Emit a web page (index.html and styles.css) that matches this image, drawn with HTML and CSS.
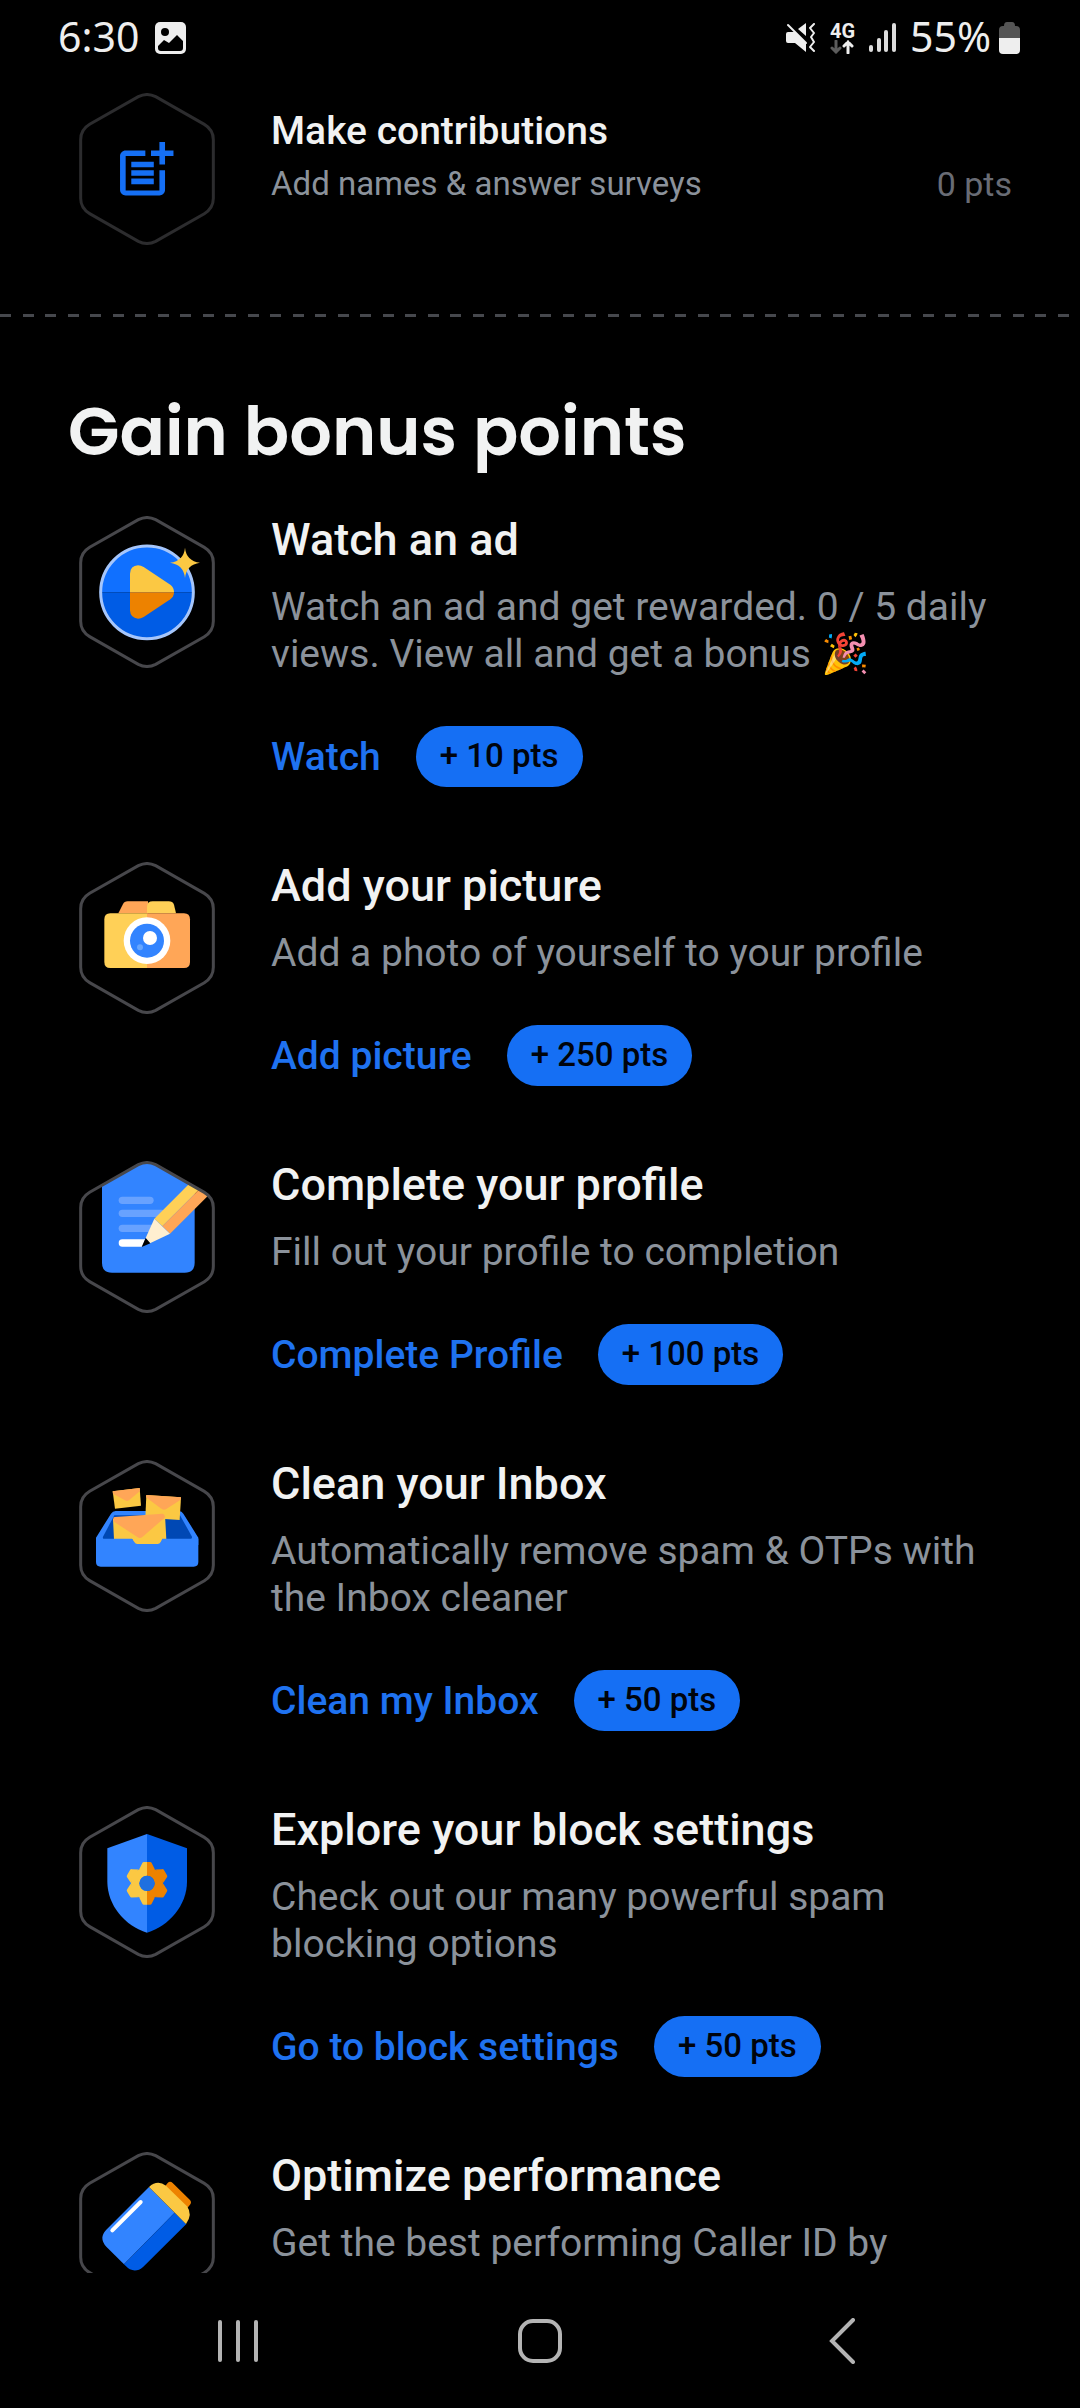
FILE: index.html
```html
<!DOCTYPE html>
<html lang="en">
<head>
<meta charset="utf-8">
<meta name="viewport" content="width=device-width, initial-scale=1">
<title>Gain bonus points</title>
<link rel="stylesheet" href="styles.css">
</head>
<body>
<svg class="defs" aria-hidden="true">
  <defs>
    <symbol id="hex" viewBox="0 0 408 456">
      <path d="M178 11Q204 -2 230 11L376 94Q403 110 403 140V316Q403 346 376 362L230 445Q204 458 178 445L32 362Q5 346 5 316V140Q5 110 32 94Z" fill="none" stroke="currentColor" stroke-width="9"/>
    </symbol>
    <clipPath id="page-clip">
      <path transform="translate(57 33)" d="M178 11Q204 -2 230 11L376 94Q403 110 403 140V316Q403 346 376 362L230 445Q204 458 178 445L32 362Q5 346 5 316V140Q5 110 32 94Z"/>
    </clipPath>
    <clipPath id="left-half"><rect x="57" y="33" width="204" height="456"/></clipPath>
    <clipPath id="right-half"><rect x="261" y="33" width="204" height="456"/></clipPath>
    <g id="gear">
      <path id="tooth" d="M238 222L247 204Q248 201 252 201H270Q274 201 275 204L284 222Z"/>
      <use href="#tooth" transform="rotate(60 261 265)"/>
      <use href="#tooth" transform="rotate(120 261 265)"/>
      <use href="#tooth" transform="rotate(180 261 265)"/>
      <use href="#tooth" transform="rotate(240 261 265)"/>
      <use href="#tooth" transform="rotate(300 261 265)"/>
      <circle cx="261" cy="265" r="35.500" fill="none" stroke="currentColor" stroke-width="25"/>
    </g>
  </defs>
</svg>

<div class="app">
  <header class="status">
    <div class="status-side">
      <span class="clock">6:30</span>
      <svg width="31" height="32" viewBox="0 0 31 32" aria-hidden="true">
        <rect width="31" height="32" rx="5" fill="#eee"/>
        <circle cx="10" cy="10" r="4" fill="#000"/>
        <path d="M3 24L9 18L14 21L22 13L28 19V26Q28 29 25 29H6Q3 29 3 26Z" fill="#000"/>
      </svg>
    </div>
    <div class="status-side status-right">
      <svg class="mute" width="30" height="30" viewBox="0 0 30 30" aria-hidden="true">
        <path d="M2 9H9L20 20V29L9 20H2Q0 20 0 18V11Q0 9 2 9ZM12 6L20 0V13Z" fill="#eee"/>
        <path d="M2 2L20 20" stroke="#eee" stroke-width="2" stroke-linecap="round"/>
        <path d="M28 1L24 5L28 10L25 14L28 19L24 24L28 28" fill="none" stroke="#eee" stroke-width="2" stroke-linecap="round" stroke-linejoin="round"/>
      </svg>
      <div class="network">
        <span>4G</span>
        <svg width="24" height="14" viewBox="0 0 24 14" fill="none" stroke-width="3" stroke-linecap="round" aria-hidden="true">
          <path d="M6 1V12M2 8L6 12L10 8" stroke="#5c5c5c"/>
          <path d="M18 13V2M14 6L18 2L22 6" stroke="#eee"/>
        </svg>
      </div>
      <svg class="signal" width="27" height="30" viewBox="0 0 27 30" fill="#ddd" aria-hidden="true">
        <rect x="0" y="22" width="4" height="7" rx="2"/>
        <rect x="8" y="15" width="4" height="14" rx="2"/>
        <rect x="15" y="7" width="4" height="22" rx="2"/>
        <rect x="23" y="0" width="4" height="29" rx="2"/>
      </svg>
      <span class="clock">55%</span>
      <svg class="battery" width="21" height="32" viewBox="0 0 21 32" aria-hidden="true">
        <path d="M0 17V8Q0 4 4 4H5Q5 0 8 0H13Q16 0 16 4H17Q21 4 21 8V17Z" fill="#555"/>
        <path d="M0 16H21V28Q21 32 17 32H4Q0 32 0 28Z" fill="#eee"/>
      </svg>
    </div>
  </header>

  <main class="content">
    <section class="row contribution">
      <svg class="badge badge-dim" viewBox="0 0 136 152" aria-hidden="true">
        <use href="#hex" width="136" height="152"/>
        <path transform="translate(32.600 43.400) scale(2.8125)" fill="#156ff4" d="M17 19.220H5V7h7V5H5c-1.100 0-2 .9-2 2v12c0 1.100.9 2 2 2h12c1.100 0 2-.9 2-2v-7h-2zM19 2h-2v3h-3v2h3v3h2V7h3V5h-3zM7 9h8v2H7zM7 12h8v2H7zM7 15h8v2H7z"/>
      </svg>
      <div class="contribution-text">
        <h2 class="contribution-title">Make contributions</h2>
        <p class="contribution-line"><span>Add names &amp; answer surveys</span><span class="points">0 pts</span></p>
      </div>
    </section>

    <hr class="divider">

    <h1 class="heading">Gain bonus points</h1>

    <div class="list">
      <section class="row">
        <svg class="badge" viewBox="57 47 408 456" aria-hidden="true">
          <use href="#hex" x="57" y="47" width="408" height="456"/>
          <path d="M121 276A140 140 0 0 1 401 276Z" fill="#1070ff"/>
          <path d="M121 276A140 140 0 0 0 401 276Z" fill="#005ce5"/>
          <circle cx="261" cy="276" r="139" fill="none" stroke="#a6c6fb" stroke-width="9"/>
          <path d="M210 276V220Q211 196 234 195Q243 195 251 200L331 253Q342 261 342 276Z" fill="#fbc843"/>
          <path d="M210 276V330Q211 353 234 355Q243 355 251 350L331 297Q342 289 342 276Z" fill="#ed8200"/>
          <path d="M375 142Q379 182 420 187Q379 193 375 233Q371 193 330 187Q371 182 375 142Z" fill="#fbc843"/>
        </svg>
        <div class="task">
          <h2 class="title">Watch an ad</h2>
          <p class="desc">Watch an ad and get rewarded. 0 / 5 daily views. View all and get a bonus 🎉</p>
          <div class="actions"><button class="link" type="button">Watch</button><span class="pill">+ 10 pts</span></div>
        </div>
      </section>

      <section class="row">
        <svg class="badge" viewBox="57 36 408 456" aria-hidden="true">
          <use href="#hex" x="57" y="36" width="408" height="456"/>
          <path d="M175 190L188 164Q193 154 203 154H264V190Z" fill="#ffa657"/>
          <path d="M261 190V170Q262 154 278 154H326Q338 154 342 164L348 190Z" fill="#ffd057"/>
          <path d="M261 190V354H151Q133 354 133 336V208Q133 190 151 190Z" fill="#ffd057"/>
          <path d="M261 190V354H372Q390 354 390 336V208Q390 190 372 190Z" fill="#ffa657"/>
          <circle cx="261" cy="272" r="70" fill="#fff"/>
          <circle cx="261" cy="272" r="51" fill="#3284ff"/>
          <circle cx="270" cy="264" r="21" fill="#fff"/>
          <circle cx="240" cy="292" r="9" fill="#66a6ff"/>
        </svg>
        <div class="task">
          <h2 class="title">Add your picture</h2>
          <p class="desc">Add a photo of yourself to your profile</p>
          <div class="actions"><button class="link" type="button">Add picture</button><span class="pill">+ 250 pts</span></div>
        </div>
      </section>

      <section class="row">
        <svg class="badge" viewBox="57 33 408 456" aria-hidden="true">
          <g clip-path="url(#page-clip)">
            <path d="M126 33H404V338Q404 368 374 368H156Q126 368 126 338Z" fill="#3284ff"/>
            <g fill="#68a2ff">
              <rect x="176" y="140" width="105" height="22" rx="11"/>
              <rect x="176" y="179" width="140" height="22" rx="11"/>
              <rect x="176" y="224" width="110" height="22" rx="11"/>
            </g>
            <path d="M187 268H256L246 290H187Q176 290 176 279Q176 268 187 268Z" fill="#fff"/>
            <path d="M283 206L423 66L446 90L307 229Z" fill="#ffd057"/>
            <path d="M307 229L446 90L469 112L330 251Z" fill="#ffa657"/>
            <path d="M283 206L330 251L270 280L257 264Z" fill="#ffefd0"/>
            <path d="M257 264L271 280L245 291Z" fill="#000"/>
          </g>
          <use href="#hex" x="57" y="33" width="408" height="456"/>
        </svg>
        <div class="task">
          <h2 class="title">Complete your profile</h2>
          <p class="desc">Fill out your profile to completion</p>
          <div class="actions"><button class="link" type="button">Complete Profile</button><span class="pill">+ 100 pts</span></div>
        </div>
      </section>

      <section class="row">
        <svg class="badge" viewBox="57 45 408 456" aria-hidden="true">
          <use href="#hex" x="57" y="45" width="408" height="456"/>
          <path d="M153 206Q158 198 167 198H356Q366 198 370 206L415 278V300H108V278Z" fill="#3284ff"/>
          <path d="M163 211H360L396 275Q397 283 390 283H134Q127 283 129 275Z" fill="#0048b4"/>
          <path d="M158 139L239 129L243 182L165 191Z" fill="#fbc843"/>
          <path d="M158 139L239 129L240 138L207 166Q201 170 195 166L159 146Z" fill="#ffa657"/>
          <path d="M259 150L363 157L359 225L256 218Z" fill="#fbc843"/>
          <path d="M259 150L363 157L362 164L319 192Q310 197 302 190L258 157Z" fill="#ffa657"/>
          <path d="M159 222L315 210L319 283H307V300H218V283H162Z" fill="#fbc843"/>
          <path d="M160 219Q160 216 165 216L308 206Q316 208 314 218L248 275Q240 282 232 276L160 229Z" fill="#ffa657"/>
          <path d="M108 281H216L223 291Q226 297 232 297H293Q299 297 302 291L307 281H415V351Q415 365 401 365H122Q108 365 108 351Z" fill="#3284ff"/>
        </svg>
        <div class="task">
          <h2 class="title">Clean your Inbox</h2>
          <p class="desc">Automatically remove spam &amp; OTPs with the Inbox cleaner</p>
          <div class="actions"><button class="link" type="button">Clean my Inbox</button><span class="pill">+ 50 pts</span></div>
        </div>
      </section>

      <section class="row">
        <svg class="badge" viewBox="57 33 408 456" aria-hidden="true">
          <use href="#hex" x="57" y="33" width="408" height="456"/>
          <path d="M261 117L142 160V260C142 330 195 393 261 413Z" fill="#3284ff"/>
          <path d="M261 117L381 160V260C381 330 327 393 261 413Z" fill="#005ce5"/>
          <g clip-path="url(#left-half)"><use class="gear-light" href="#gear"/></g>
          <g clip-path="url(#right-half)"><use class="gear-dark" href="#gear"/></g>
          <circle cx="261" cy="265" r="23" fill="#1f70e0"/>
        </svg>
        <div class="task">
          <h2 class="title">Explore your block settings</h2>
          <p class="desc">Check out our many powerful spam blocking options</p>
          <div class="actions"><button class="link" type="button">Go to block settings</button><span class="pill">+ 50 pts</span></div>
        </div>
      </section>

      <section class="row">
        <svg class="badge" viewBox="57 36 408 456" aria-hidden="true">
          <use href="#hex" x="57" y="36" width="408" height="456"/>
          <path d="M314 140L323 129Q330 122 338 129L390 180Q396 187 390 194L380 206Z" fill="#ed8200"/>
          <path d="M267 141L344 218L192 373L139 320Q115 294 139 269Z" fill="#3284ff"/>
          <path d="M344 218L379 252L250 380Q222 405 195 376L192 373Z" fill="#005ce5"/>
          <path d="M267 141Q292 118 318 137L381 199Q399 224 378 252Z" fill="#fbc843"/>
          <path d="M157 271L242 186" stroke="#fff" stroke-width="12" stroke-linecap="round"/>
        </svg>
        <div class="task">
          <h2 class="title">Optimize performance</h2>
          <p class="desc">Get the best performing Caller ID by</p>
        </div>
      </section>
    </div>
  </main>

  <nav class="nav" aria-label="System">
    <button class="nav-button" type="button" aria-label="Recent apps">
      <svg width="40" height="42" viewBox="0 0 40 42" fill="#b4b4b4"><rect width="4" height="42" rx="2"/><rect x="18" width="4" height="42" rx="2"/><rect x="36" width="4" height="42" rx="2"/></svg>
    </button>
    <button class="nav-button" type="button" aria-label="Home">
      <svg width="44" height="44" viewBox="0 0 44 44"><rect x="2" y="2" width="40" height="40" rx="13" fill="none" stroke="#b4b4b4" stroke-width="4"/></svg>
    </button>
    <button class="nav-button" type="button" aria-label="Back">
      <svg width="26" height="46" viewBox="0 0 26 46"><path d="M24 2L3 23L24 44" fill="none" stroke="#b4b4b4" stroke-width="4" stroke-linecap="round"/></svg>
    </button>
  </nav>
</div>
</body>
</html>
```
FILE: styles.css
```css
* {
  box-sizing: border-box;
}

body {
  margin: 0;
  background: #000;
  color: #f1f2f2;
  font-family: Roboto, "Noto Sans", sans-serif;
}

h1,
h2,
p {
  margin: 0;
}

button {
  padding: 0;
  border: 0;
  background: none;
  font-family: inherit;
  cursor: pointer;
}

svg {
  display: block;
  flex: none;
}

.defs {
  position: absolute;
  width: 0;
  height: 0;
}

.app {
  display: flex;
  flex-direction: column;
  height: 100vh;
}

/* Status bar */
.status {
  display: flex;
  flex: none;
  justify-content: space-between;
  align-items: center;
  height: 75px;
  padding: 0 60px 0 58px;
}

.status-side {
  display: flex;
  align-items: center;
  gap: 16px;
}

.status-right {
  gap: 14px;
}

.clock {
  padding-bottom: 4px;
  color: #eee;
  font-family: "Noto Sans", sans-serif;
  font-size: 41px;
  line-height: 48px;
}

.network {
  display: flex;
  flex-direction: column;
  align-items: center;
  color: #eee;
  font-size: 20px;
  font-weight: 700;
  line-height: 18px;
}

.battery {
  margin-left: -6px;
}

/* Scrolling content */
.content {
  flex: 1;
  min-height: 0;
  overflow: hidden;
  padding-top: 18px;
}

.row {
  display: flex;
  align-items: flex-start;
  gap: 56px;
  padding: 0 68px 0 79px;
}

.badge {
  width: 136px;
  height: 152px;
  color: #47474b;
}

.badge-dim {
  color: #2c2c2e;
}

.contribution-text {
  flex: 1;
  padding-top: 15px;
}

.contribution-title {
  font-size: 39px;
  font-weight: 500;
  line-height: 46px;
}

.contribution-line {
  display: flex;
  justify-content: space-between;
  margin-top: 10px;
  color: #8b929b;
  font-size: 33px;
  line-height: 40px;
}

.points {
  color: #696c75;
  font-size: 34px;
}

.divider {
  height: 3px;
  margin: 69px 0 0;
  border: 0;
  background: repeating-linear-gradient(90deg, #46484d 0 11px, transparent 11px 23px, #46484d 23px 34px, transparent 34px 45px);
}

.heading {
  padding: 73px 68px 0;
  font-family: Poppins, Inter, sans-serif;
  font-size: 67px;
  font-weight: 600;
  line-height: 84px;
}

.list {
  display: flex;
  flex-direction: column;
  gap: 72px;
  padding-top: 39px;
}

.list .badge {
  margin-top: 3px;
}

.task {
  flex: 1;
}

.title {
  font-size: 45px;
  font-weight: 500;
  line-height: 53px;
}

.desc {
  margin-top: 18px;
  color: #8b929b;
  font-size: 39px;
  line-height: 47px;
}

.actions {
  display: flex;
  align-items: center;
  gap: 35px;
  margin-top: 48px;
}

.link {
  color: #1f72f0;
  font-size: 39px;
  font-weight: 500;
  line-height: 46px;
}

.pill {
  padding: 10px 24px 11px;
  border-radius: 31px;
  background: #156ff4;
  color: #00040c;
  font-size: 33px;
  font-weight: 500;
  line-height: 40px;
}

.gear-light {
  color: #fbc843;
  fill: #fbc843;
}

.gear-dark {
  color: #ed8200;
  fill: #ed8200;
}

/* System navigation */
.nav {
  display: flex;
  flex: none;
  height: 135px;
  padding: 0 87px;
}

.nav-button {
  display: flex;
  flex: 1;
  align-items: center;
  justify-content: center;
}
```
